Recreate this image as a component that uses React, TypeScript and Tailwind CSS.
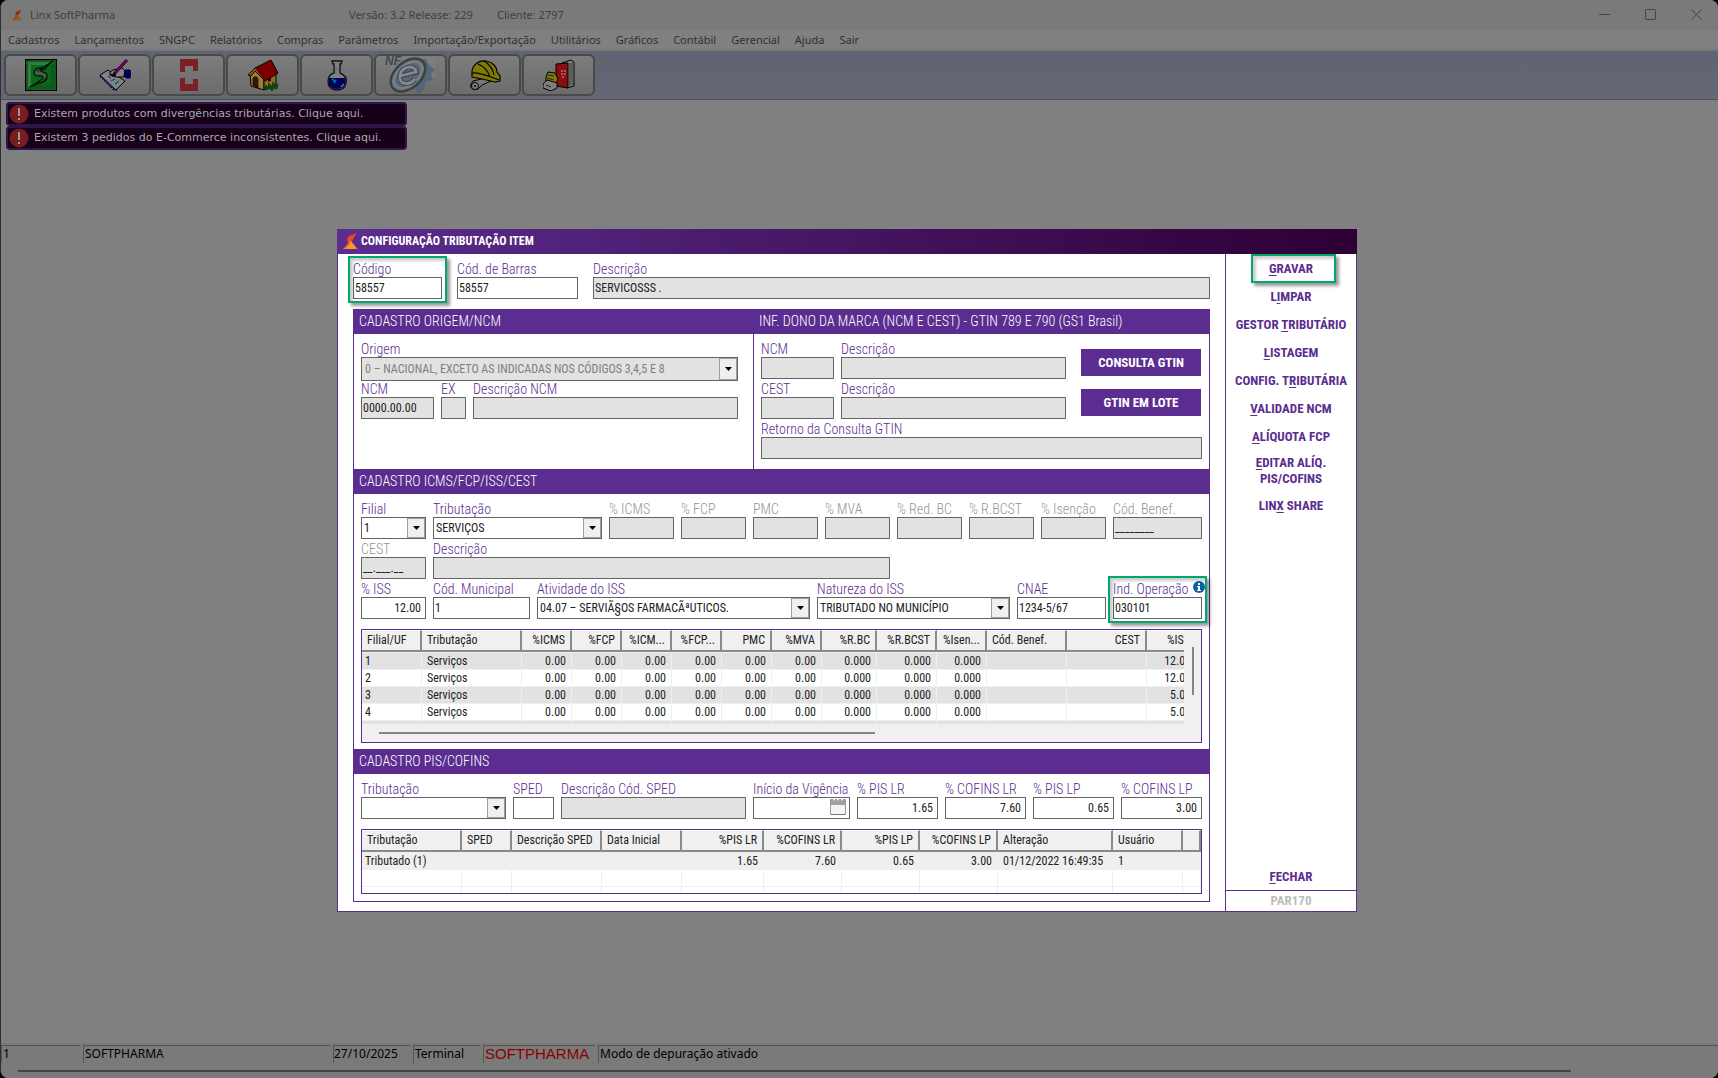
import React from "react";

/* ---------- toolbar drawings ---------- */

const icons: Record<string, React.ReactNode> = {
  Cadastro: (
    <svg viewBox="0 0 32 32" className="h-8 w-8">
      <rect x="0.5" y="0.5" width="31" height="31" fill="#0c5a1c" stroke="#000" />
      <path d="M3 3h26l-4 4H7v18l-4 4z" fill="#3a7a48" />
      <rect x="6" y="6" width="20" height="20" fill="#0a6a1a" />
      <path d="M28 2L17 9c-5 0-8 2-8 5s3 3 6 3c4 0 4 2 1 4l-11 7 13-5c5-2 6-9 0-10-4-1-3-3 1-3z" fill="#4b5a50" stroke="#001a00" strokeWidth="1.3" />
      <path d="M12 13c0-2 5-2 9-3M11 24c6 0 9-2 9-5" fill="none" stroke="#001a00" strokeWidth="1" />
    </svg>
  ),
  Pedidos: (
    <svg viewBox="0 0 32 32" className="h-8 w-8">
      <path d="M1 16l8-5 17 11-9 9z" fill="#828282" stroke="#000" />
      <path d="M1 17l13 13 4 1" fill="none" stroke="#000060" strokeWidth="1.6" strokeDasharray="2 1" />
      <path d="M9 17l3 2M12 22l4-2M16 25l4-3" stroke="#006060" strokeWidth="1.2" />
      <path d="M11 13l3-2 9-2 5 5-4 4-7 0-6-2z" fill="#858585" stroke="#000" />
      <path d="M11 15l6 1M13 17l4-1" stroke="#000" strokeWidth="1" />
      <path d="M26 11h5l1 3-1 5h-4l-2-2z" fill="#000060" stroke="#000030" />
      <path d="M28 1L15 15" stroke="#200020" strokeWidth="3" />
      <path d="M28 1L16 14" stroke="#800080" strokeWidth="1.6" />
      <path d="M16 14l-3 3" stroke="#000" strokeWidth="1.2" />
    </svg>
  ),
  Farmacia: (
    <svg viewBox="0 0 32 32" className="h-8 w-8">
      <path d="M7 0h18v12h-5V7h-8v6H7z" fill="#7b2026" />
      <path d="M7 19h5v6h8v-5h5v12H7z" fill="#7b2026" />
    </svg>
  ),
  Inicio: (
    <svg viewBox="0 0 32 32" className="h-8 w-8">
      <path d="M3 14l5-3 9 6v14L4 27z" fill="#a07c34" stroke="#000" />
      <path d="M17 17l12-4v12l-12 6z" fill="#8e6c28" stroke="#000" />
      <path d="M8 9L24 1l7 13-13 8z" fill="#7d0000" stroke="#000" />
      <path d="M8 9l-7 7 3 1 4-5 10 10" fill="#85642a" stroke="#200" />
      <path d="M6 26v-6c0-3 5-3 5 1v8z" fill="#3a1800" stroke="#000" strokeWidth=".7" />
      <path d="M21 20l3-1v3l-3 1z" fill="#400" />
      <path d="M17 30l2-4 2 3 1-5 3 4 1-5 2 4 3-2-1 5-3-1-2 3-3-3-2 2z" fill="#085008" stroke="#002800" strokeWidth=".6" />
    </svg>
  ),
  Formulas: (
    <svg viewBox="0 0 32 32" className="h-8 w-8">
      <path d="M11 2h10l-1 3h-1v9c5 2 7 6 6 10-1 5-4 7-9 7s-9-3-9-8c0-4 2-8 6-9V5h-1z" fill="#818181" stroke="#151515" strokeWidth="1.4" />
      <path d="M8 19h16c2 6-1 11-8 11S6 25 8 19z" fill="#00005e" />
      <path d="M11 20l3 2M13 24l2-3" stroke="#00777a" strokeWidth="1.6" />
      <path d="M15 7v7M18 7v5" stroke="#555" strokeDasharray="1 1" />
      <path d="M20 28l3-3" stroke="#778" strokeWidth="1.2" />
    </svg>
  ),
  NFe: (
    <svg viewBox="0 0 52 40" className="h-10 w-13">
      <path d="M6 2h44v20H6z" fill="#828282" opacity=".5" />
      <path d="M30 4l11 0 3 6 6 5-4 4 2 6-7 1-2 8-5 5-4-5-7 1z" fill="#4f627a" opacity=".85" />
      <ellipse cx="23" cy="20" rx="20" ry="13" transform="rotate(-42 23 20)" fill="#6d757c" stroke="#39433b" strokeWidth="2.4" />
      <ellipse cx="23" cy="20" rx="16" ry="10" transform="rotate(-42 23 20)" fill="#5c6771" stroke="#7d858c" strokeWidth="1.5" />
      <text x="0" y="10" fontFamily="Liberation Sans" fontWeight="700" fontStyle="italic" fontSize="12" fill="#3f4850">NF</text>
      <path d="M15 21l16-4c-1-8-14-6-16 3-2 10 9 11 15 4" fill="none" stroke="#3a4757" strokeWidth="5" />
      <path d="M15 21l16-4c-1-8-14-6-16 3-2 10 9 11 15 4" fill="none" stroke="#84898f" strokeWidth="2.8" />
    </svg>
  ),
  Obras: (
    <svg viewBox="0 0 32 32" className="h-8 w-8">
      <path d="M4 22l13-3 5 3-9 4-4 4c-4 2-9-1-7-5z" fill="#777" stroke="#000" />
      <circle cx="6" cy="27" r="3.500" fill="#858585" stroke="#000" />
      <circle cx="6" cy="27" r="1.200" fill="#222" />
      <path d="M3 15C2 7 9 1 17 2c7 1 11 6 11 11l3 4v5l-5 1-13-3-10-2z" fill="#807a00" stroke="#000" strokeWidth="1.200" />
      <path d="M9 5c5 2 10 7 12 13M15 2c5 3 9 8 10 14M3 14c8-1 16 3 27 7" fill="none" stroke="#000" strokeWidth="1.100" />
    </svg>
  ),
  Agenda: (
    <svg viewBox="0 0 32 32" className="h-8 w-8">
      <path d="M19 4l9-3 3 2v24l-7 2z" fill="#858585" stroke="#000" />
      <path d="M27 4v23M29 3v23" stroke="#222" strokeWidth=".8" />
      <path d="M13 5l12-1v25l-12-2z" fill="#8a0d10" stroke="#000" />
      <path d="M18 12l5 0M18 15l5 0M19 18l3 0" stroke="#bbb" strokeWidth=".9" strokeDasharray="2 1" />
      <path d="M3 18l2-5 7 1 3 6-3 6-9-3z" fill="#807a10" stroke="#000" />
      <path d="M0 25l4-4 10 3v5l-6 3-8-3z" fill="#808080" stroke="#000" />
      <path d="M5 16l6 1M4 19l7 2M3 26l5 2" stroke="#222" strokeWidth="1" />
    </svg>
  ),
};

function LinxMark({ className, dim }: { className: string; dim?: boolean }) {
  return (
    <svg viewBox="0 0 16 18" className={className} aria-hidden="true">
      <path d="M14.500 1L7 4 5 7l4 4z" fill={dim ? "#8a2b1c" : "#ee4423"} />
      <path d="M5 6l5 4-4 6-5 1 5-6z" fill={dim ? "#93421c" : "#f0532a"} />
      <path d="M9 9l6.500 8H1c4-1 6-4 8-8z" fill={dim ? "#9a5a1e" : "#f79a2e"} />
    </svg>
  );
}

/* ---------- form parts ---------- */

type FieldProps = {
  label: string;
  width: string;
  value?: string;
  disabled?: boolean;
  muted?: boolean;
  right?: boolean;
  mark?: boolean;
  children?: React.ReactNode;
};

function Highlight() {
  return (
    <span className="pointer-events-none absolute -inset-x-[5px] -top-[5px] -bottom-1 border-2 border-[#00a86b] shadow-[3px_3px_3px_#0006,inset_3px_3px_3px_#0003]" />
  );
}

function Field({ label, width, value = "", disabled, muted, right, mark, children }: FieldProps) {
  const id = React.useId();
  return (
    <div className={"relative flex min-w-0 flex-col " + width}>
      <label htmlFor={id} className={"h-4 text-sm/4 font-light whitespace-nowrap " + (muted ? "text-[#959595]" : "text-[#5b2d90]")}>
        {label}
      </label>
      <span className="relative block">
        <input
          id={id}
          defaultValue={value}
          readOnly={disabled}
          className={
            "block h-[22px] w-full border border-[#646464] px-px text-xs text-[#222] outline-none " +
            (disabled ? "bg-[#e2e2e2] " : "bg-white ") +
            (right ? "pr-1 text-right" : "")
          }
        />
        {children}
      </span>
      {mark && <Highlight />}
    </div>
  );
}

function Select({ label, width, value = "", disabled, tall }: FieldProps & { tall?: boolean }) {
  const id = React.useId();
  return (
    <div className={"flex min-w-0 flex-col " + width}>
      <label htmlFor={id} className="h-4 text-sm/4 font-light whitespace-nowrap text-[#5b2d90]">
        {label}
      </label>
      <div className="relative">
        <select
          id={id}
          disabled={disabled}
          className={
            "block w-full appearance-none border border-[#646464] pr-5 text-xs opacity-100 outline-none " +
            (tall ? "h-6 pl-[3px] " : "h-[22px] pl-[2px] ") +
            (disabled ? "bg-[#e2e2e2] text-[#808080]" : "bg-white text-[#222]")
          }
        >
          <option>{value}</option>
        </select>
        <span className="pointer-events-none absolute inset-y-px right-px flex w-[18px] items-center justify-center border border-[#a0a0a0] bg-[#f0f0f0]">
          <svg viewBox="0 0 7 4" className="h-1 w-[7px]">
            <path d="M0 0h7L3.500 4z" fill="#000" />
          </svg>
        </span>
      </div>
    </div>
  );
}

type Col = { head: string; width: string; right?: boolean };

function Grid({ cols, rows, rowClass, name }: { cols: Col[]; rows: string[][]; rowClass: (i: number) => string; name: string }) {
  return (
    <table aria-label={name} className="w-full table-fixed border-separate border-spacing-0 text-xs text-[#222]">
      <thead>
        <tr className="h-[22px]">
          {cols.map((c, i) => (
            <th
              key={i}
              scope="col"
              className={
                "border-t border-r-2 border-b-2 border-t-white border-r-[#8a8a8a] border-b-[#8a8a8a] bg-[#f0f0f0] px-[5px] font-normal whitespace-nowrap " +
                c.width + (c.right ? " text-right" : " text-left")
              }
            >
              {c.head}
            </th>
          ))}
        </tr>
      </thead>
      <tbody>
        {rows.map((r, i) => (
          <tr key={i} className={"h-[17px] leading-4 " + rowClass(i)}>
            {cols.map((c, j) => (
              <td
                key={j}
                className={
                  "h-[17px] border-r border-b border-[#efefef] p-0 whitespace-nowrap " +
                  (i === 0 ? "h-[18px] border-t " : "") +
                  (c.right ? "pr-[5px] text-right" : j === 0 ? "pl-[3px]" : "pl-[5px]")
                }
              >
                {r[j] ?? ""}
              </td>
            ))}
          </tr>
        ))}
      </tbody>
    </table>
  );
}

function SectionHead({ children }: { children: React.ReactNode }) {
  return <h2 className="flex h-[25px] items-center bg-[#5b2d90] pb-px pl-[5px] text-sm font-light text-white">{children}</h2>;
}

/* ---------- data ---------- */

const menus = ["Cadastros", "Lançamentos", "SNGPC", "Relatórios", "Compras", "Parâmetros", "Importação/Exportação", "Utilitários", "Gráficos", "Contábil", "Gerencial", "Ajuda", "Sair"];

const icmsCols: Col[] = [
  { head: "Filial/UF", width: "w-[60px]" },
  { head: "Tributação", width: "w-[100px]" },
  { head: "%ICMS", width: "w-[50px]", right: true },
  { head: "%FCP", width: "w-[50px]", right: true },
  { head: "%ICM...", width: "w-[50px]", right: true },
  { head: "%FCP...", width: "w-[50px]", right: true },
  { head: "PMC", width: "w-[50px]", right: true },
  { head: "%MVA", width: "w-[50px]", right: true },
  { head: "%R.BC", width: "w-[55px]", right: true },
  { head: "%R.BCST", width: "w-[60px]", right: true },
  { head: "%Isen...", width: "w-[50px]", right: true },
  { head: "Cód. Benef.", width: "w-[80px]" },
  { head: "CEST", width: "w-[80px]", right: true },
  { head: "%ISS", width: "w-[50px]", right: true },
];

const icmsRow = (filial: string, iss: string) => [filial, "Serviços", "0.00", "0.00", "0.00", "0.00", "0.00", "0.00", "0.000", "0.000", "0.000", "", "", iss];
const icmsRows = [icmsRow("1", "12.00"), icmsRow("2", "12.00"), icmsRow("3", "5.00"), icmsRow("4", "5.00"), []];

const pisCols: Col[] = [
  { head: "Tributação", width: "w-[100px]" },
  { head: "SPED", width: "w-[50px]" },
  { head: "Descrição SPED", width: "w-[90px]" },
  { head: "Data Inicial", width: "w-[80px]" },
  { head: "%PIS LR", width: "w-[82px]", right: true },
  { head: "%COFINS LR", width: "w-[78px]", right: true },
  { head: "%PIS LP", width: "w-[78px]", right: true },
  { head: "%COFINS LP", width: "w-[78px]", right: true },
  { head: "Alteração", width: "w-[115px]" },
  { head: "Usuário", width: "w-[70px]" },
  { head: "", width: "" },
];
const pisRows = [["Tributado (1)", "", "", "", "1.65", "7.60", "0.65", "3.00", "01/12/2022 16:49:35", "1"], [], []];

type Parts = [string, string, string];
const actions: Parts[] = [
  ["L", "I", "MPAR"],
  ["GESTOR ", "T", "RIBUTÁRIO"],
  ["", "L", "ISTAGEM"],
  ["CONFIG. T", "R", "IBUTÁRIA"],
  ["", "V", "ALIDADE NCM"],
  ["", "A", "LÍQUOTA FCP"],
];

function Key({ parts }: { parts: Parts }) {
  return (
    <>
      {parts[0]}
      <u className="underline-offset-2">{parts[1]}</u>
      {parts[2]}
    </>
  );
}

/* ---------- dialog ---------- */

function TaxDialog() {
  return (
    <section
      role="dialog"
      aria-label="Configuração tributação item"
      className="w-full max-w-[1020px] border-x border-b border-[#5b2d90] bg-white font-['Roboto_Condensed',Roboto,sans-serif]"
    >
      <header className="-mx-px flex h-[25px] items-center gap-[3px] bg-linear-to-r from-[#5b2d90] to-[#2e0035] pl-[5px]">
        <LinxMark className="h-[18px] w-4" />
        <h1 className="text-xs font-bold text-white">CONFIGURAÇÃO TRIBUTAÇÃO ITEM</h1>
      </header>

      <div className="flex">
        <div className="min-w-0 flex-1 px-[15px] pt-[7px] pb-[9px]">
          <div className="flex gap-[15px]">
            <Field label="Código" width="w-[89px]" value="58557" mark />
            <Field label="Cód. de Barras" width="w-[121px]" value="58557" />
            <Field label="Descrição" width="flex-1" value="SERVICOSSS ." disabled />
          </div>

          <div className="mt-[10px] border-x border-b border-[#5b2d90]">
            <div className="flex h-40">
              <div className="flex w-[400px] flex-col border-r border-[#5b2d90]">
                <SectionHead>CADASTRO ORIGEM/NCM</SectionHead>
                <div className="py-[7px] pr-[15px] pl-[7px]">
                  <Select label="Origem" width="w-full" value="0 – NACIONAL, EXCETO AS INDICADAS NOS CÓDIGOS 3,4,5 E 8" disabled tall />
                  <div className="flex gap-[7px]">
                    <Field label="NCM" width="w-[73px]" value="0000.00.00" disabled />
                    <Field label="EX" width="w-[25px]" disabled />
                    <Field label="Descrição NCM" width="flex-1" disabled />
                  </div>
                </div>
              </div>
              <div className="-ml-px flex min-w-0 flex-1 flex-col border-l border-[#5b2d90]">
                <SectionHead>INF. DONO DA MARCA (NCM E CEST) - GTIN 789 E 790 (GS1 Brasil)</SectionHead>
                <div className="flex flex-col gap-[2px] p-[7px]">
                  <div className="flex gap-[15px]">
                    <div className="flex min-w-0 flex-1 flex-col gap-[2px]">
                      <div className="flex gap-[7px]">
                        <Field label="NCM" width="w-[73px]" disabled />
                        <Field label="Descrição" width="flex-1" disabled />
                      </div>
                      <div className="flex gap-[7px]">
                        <Field label="CEST" width="w-[73px]" disabled />
                        <Field label="Descrição" width="flex-1" disabled />
                      </div>
                    </div>
                    <div className="flex w-[121px] flex-col gap-[13px] pt-2 pr-px">
                      <button className="h-[27px] bg-[#5b2d90] pt-px text-[13px] font-bold text-white">CONSULTA GTIN</button>
                      <button className="h-[27px] bg-[#5b2d90] pt-px text-[13px] font-bold text-white">GTIN EM LOTE</button>
                    </div>
                  </div>
                  <Field label="Retorno da Consulta GTIN" width="w-full" disabled />
                </div>
              </div>
            </div>

            <SectionHead>CADASTRO ICMS/FCP/ISS/CEST</SectionHead>
            <div className="flex flex-col gap-[2px] px-[7px] pt-[7px] pb-[6px]">
              <div className="flex gap-[7px]">
                <Select label="Filial" width="w-[65px]" value="1" />
                <Select label="Tributação" width="w-[169px]" value="SERVIÇOS" />
                <Field label="% ICMS" width="w-[65px]" disabled muted />
                <Field label="% FCP" width="w-[65px]" disabled muted />
                <Field label="PMC" width="w-[65px]" disabled muted />
                <Field label="% MVA" width="w-[65px]" disabled muted />
                <Field label="% Red. BC" width="w-[65px]" disabled muted />
                <Field label="% R.BCST" width="w-[65px]" disabled muted />
                <Field label="% Isenção" width="w-[65px]" disabled muted />
                <Field label="Cód. Benef." width="flex-1" value="________" disabled muted />
              </div>
              <div className="flex gap-[7px]">
                <Field label="CEST" width="w-[65px]" value="__.___.__" disabled muted />
                <Field label="Descrição" width="w-[457px]" disabled />
              </div>
              <div className="flex gap-[7px]">
                <Field label="% ISS" width="w-[65px]" value="12.00" right />
                <Field label="Cód. Municipal" width="w-[97px]" value="1" />
                <Select label="Atividade do ISS" width="w-[273px]" value="04.07 – SERVIÃ§OS FARMACÃªUTICOS." />
                <Select label="Natureza do ISS" width="w-[193px]" value="TRIBUTADO NO MUNICÍPIO" />
                <Field label="CNAE" width="w-[89px]" value="1234-5/67" />
                <Field label="Ind. Operação" width="flex-1" value="030101" mark>
                  <svg viewBox="0 0 12 12" className="absolute -top-4 -right-[3px] h-3 w-3" role="img" aria-label="Informação">
                    <circle cx="6" cy="6" r="6" fill="#0d5ca8" />
                    <path d="M5 2h2v2H5zM4 5h3v4h1v1H4V9h1V6H4z" fill="#fff" />
                  </svg>
                </Field>
              </div>

              <div className="mt-2 h-[114px] border border-[#5b2d90] bg-[#f0f0f0]">
                <div className="flex h-[94px]">
                  <div className="min-w-0 flex-1 overflow-hidden bg-white">
                    <div className="w-[835px]">
                      <Grid name="Tributação por filial" cols={icmsCols} rows={icmsRows} rowClass={(i) => (i % 2 ? "bg-white" : "bg-[#e2e2e2]")} />
                    </div>
                  </div>
                  <div className="flex w-[17px] justify-center pt-[17px]">
                    <div className="h-12 w-[2px] bg-[#858585]" />
                  </div>
                </div>
                <div className="pt-2 pr-[326px] pl-[17px]">
                  <div className="h-[2px] bg-[#858585]" />
                </div>
              </div>
            </div>

            <SectionHead>CADASTRO PIS/COFINS</SectionHead>
            <div className="p-[7px]">
              <div className="flex gap-[7px]">
                <Select label="Tributação" width="w-[145px]" />
                <Field label="SPED" width="w-[41px]" />
                <Field label="Descrição Cód. SPED" width="flex-1" disabled />
                <Field label="Início da Vigência" width="w-[97px]">
                  <svg viewBox="0 0 16 17" className="absolute top-[2px] right-1 h-[17px] w-4" aria-hidden="true">
                    <path d="M.5.500h15v15H.5z" fill="#f4f4f4" stroke="#999" />
                    <path d="M1 1h14v5H1z" fill="#a0a0a0" />
                    <path d="M3 0l1 2 1-2M7 0l1 2 1-2M11 0l1 2 1-2" fill="#fff" />
                    <path d="M1 15.500h14" stroke="#777" />
                  </svg>
                </Field>
                <Field label="% PIS LR" width="w-[81px]" value="1.65" right />
                <Field label="% COFINS LR" width="w-[81px]" value="7.60" right />
                <Field label="% PIS LP" width="w-[81px]" value="0.65" right />
                <Field label="% COFINS LP" width="w-[81px]" value="3.00" right />
              </div>
              <div className="mt-[10px] h-[65px] overflow-hidden border border-[#5b2d90]">
                <Grid name="PIS e COFINS" cols={pisCols} rows={pisRows} rowClass={(i) => (i ? "bg-white" : "bg-[#efefef]")} />
              </div>
            </div>
          </div>
        </div>

        <nav className="flex w-[131px] flex-col border-l border-[#5b2d90] text-[13px] font-bold text-[#5b2d90]">
          <div className="relative mx-auto mt-px flex h-7 w-20">
            <span className="pointer-events-none absolute inset-y-0 -top-px -right-[5px] left-0 border-2 border-[#00a86b] shadow-[3px_3px_3px_#0006,inset_3px_3px_3px_#0003]" />
            <button className="relative w-full">
              <Key parts={["", "G", "RAVAR"]} />
            </button>
          </div>
          {actions.map((a) => (
            <button key={a.join("")} className="h-7">
              <Key parts={a} />
            </button>
          ))}
          <button className="h-10 px-6 leading-4">
            <Key parts={["", "E", "DITAR ALÍQ. PIS/COFINS"]} />
          </button>
          <button className="h-[30px]">
            <Key parts={["LIN", "X", " SHARE"]} />
          </button>
          <button className="mt-auto h-[26px]">
            <Key parts={["", "F", "ECHAR"]} />
          </button>
          <p className="flex h-[21px] items-center justify-center border-t border-[#5b2d90] text-[#bdbdbd]">PAR170</p>
        </nav>
      </div>
    </section>
  );
}

/* ---------- main window ---------- */

export default function App() {
  return (
    <div className="bg-black">
      <div className="flex min-h-screen flex-col overflow-hidden rounded-lg border-l border-[#303030] bg-[#808080] font-['Noto_Sans',sans-serif]">
        <header className="flex h-[30px] items-center bg-[#7a7a7a] text-[11px] text-[#404040]">
          <div className="flex w-[348px] items-center gap-[7px] pl-[10px]">
            <LinxMark className="h-3 w-3" dim />
            <span>Linx SoftPharma</span>
          </div>
          <span className="w-[148px]">Versão: 3.2 Release: 229</span>
          <span className="flex-1">Cliente: 2797</span>
          <div className="flex gap-[35px] pr-4 pb-px">
            <button aria-label="Minimizar">
              <svg viewBox="0 0 11 11" className="h-[11px] w-[11px]"><path d="M0 5.500h11" stroke="#444" /></svg>
            </button>
            <button aria-label="Maximizar">
              <svg viewBox="0 0 11 11" className="h-[11px] w-[11px]"><rect x=".5" y=".5" width="10" height="10" rx="1" fill="none" stroke="#444" /></svg>
            </button>
            <button aria-label="Fechar janela">
              <svg viewBox="0 0 11 11" className="h-[11px] w-[11px]"><path d="M.5.500l10 10M10.500.500l-10 10" stroke="#444" /></svg>
            </button>
          </div>
        </header>

        <nav className="flex h-[21px] items-center gap-[15px] border-b-2 border-[#777] bg-[#808080] pt-px pl-[7px] text-[11px] text-[#303030]">
          {menus.map((m) => (
            <button key={m}>{m}</button>
          ))}
        </nav>

        <div className="flex h-[49px] items-start gap-px border-b border-[#505050] bg-linear-to-b from-[#5f6472] to-[#656873] pt-[3px] pl-[3px]">
          {Object.keys(icons).map((k) => (
            <button
              key={k}
              aria-label={k}
              className="flex h-[42px] w-[73px] items-center justify-center rounded-md border-2 border-[#4a4a4a] bg-linear-to-b from-[#7d7d7d] to-[#6c6c6c]"
            >
              {icons[k]}
            </button>
          ))}
        </div>

        <main className="flex-1 px-[5px] pt-[2px]">
          <div className="flex w-[401px] max-w-full flex-col font-['DejaVu_Sans',sans-serif] text-[11px] text-[#a9a9a9]">
            {["Existem produtos com divergências tributárias. Clique aqui.", "Existem 3 pedidos do E-Commerce inconsistentes. Clique aqui."].map((t) => (
              <button key={t} className="flex h-6 items-center gap-[5px] rounded-sm border-2 border-[#2d1748] bg-[#170019] pl-px text-left">
                <svg viewBox="0 0 20 20" className="h-5 w-5" aria-hidden="true">
                  <circle cx="10" cy="10" r="9.500" fill="#781c20" />
                  <path d="M9 4h2v8H9zM9 14h2v2H9z" fill="#999" />
                </svg>
                {t}
              </button>
            ))}
          </div>
        </main>

        <footer className="bg-[#7a7a7a] pt-[2px] text-xs text-black">
          <div className="flex h-[18px] gap-[3px] *:border-t *:border-l *:border-[#555] *:leading-4">
            <span className="w-[79px] pl-px">1</span>
            <span className="w-[247px] pl-px">SOFTPHARMA</span>
            <span className="w-[77px]">27/10/2025</span>
            <span className="w-[67px] pl-px">Terminal</span>
            <span className="w-[112px] pl-px font-['Liberation_Sans',sans-serif] text-[15px] text-[#8b0000]">SOFTPHARMA</span>
            <span className="flex-1 pl-px">Modo de depuração ativado</span>
          </div>
          <div className="h-[15px] pt-[7px] pr-[147px] pl-[17px]">
            <div className="h-[2px] bg-[#444]" />
          </div>
        </footer>
      </div>

      <div className="fixed inset-0 flex items-center justify-center pt-[62px] pr-6">
        <TaxDialog />
      </div>
    </div>
  );
}
